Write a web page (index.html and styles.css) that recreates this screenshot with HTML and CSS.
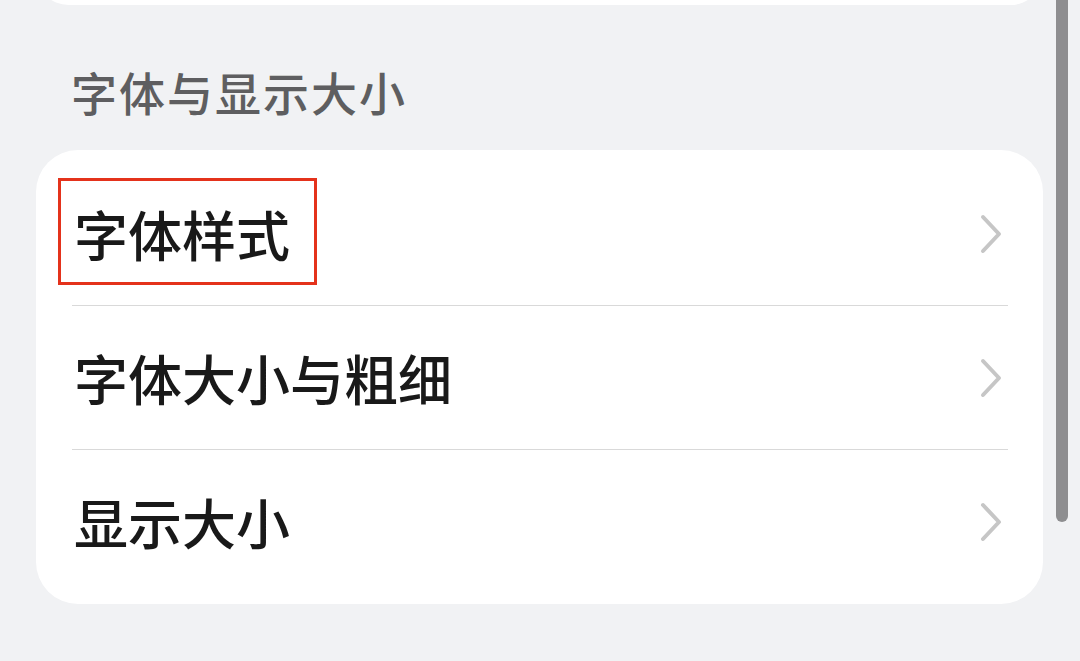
FILE: index.html
```html
<!DOCTYPE html>
<html lang="zh-CN">
<head>
<meta charset="utf-8">
<title>字体与显示大小</title>
<link rel="stylesheet" href="styles.css">
</head>
<body>
<div class="page">
  <div class="card card-top"></div>
  <div class="section-title">字体与显示大小</div>
  <div class="card list">
    <div class="row">
      <span class="label highlighted">字体样式</span>
      <svg class="chevron" viewBox="0 0 24 42" width="24" height="42"><path d="M4 4 L20 21 L4 38" fill="none" stroke="#c6c6c6" stroke-width="4" stroke-linecap="round" stroke-linejoin="round"/></svg>
    </div>
    <div class="divider"></div>
    <div class="row">
      <span class="label">字体大小与粗细</span>
      <svg class="chevron" viewBox="0 0 24 42" width="24" height="42"><path d="M4 4 L20 21 L4 38" fill="none" stroke="#c6c6c6" stroke-width="4" stroke-linecap="round" stroke-linejoin="round"/></svg>
    </div>
    <div class="divider"></div>
    <div class="row">
      <span class="label">显示大小</span>
      <svg class="chevron" viewBox="0 0 24 42" width="24" height="42"><path d="M4 4 L20 21 L4 38" fill="none" stroke="#c6c6c6" stroke-width="4" stroke-linecap="round" stroke-linejoin="round"/></svg>
    </div>
  </div>
</div>
<div class="scrollbar"></div>
</body>
</html>
```
FILE: styles.css
```css
html, body {
  margin: 0;
  padding: 0;
  height: 100%;
  overflow: hidden;
}
body {
  background: #f1f2f4;
  font-family: "Noto Sans CJK SC", "Noto Sans", sans-serif;
  position: relative;
}
.page {
  display: flex;
  flex-direction: column;
  padding: 0 37px 0 36px;
}
.card {
  background: #ffffff;
  border-radius: 42px;
}
.card-top {
  height: 65px;
  margin-top: -60px;
}
.section-title {
  margin-top: 59px;
  margin-bottom: 4px;
  padding-left: 35px;
  font-size: 46px;
  line-height: 55px;
  font-weight: 500;
  color: #5e5e60;
  letter-spacing: 2px;
}
.list {
  margin-top: 27px;
  padding: 13px 0 11px;
  display: flex;
  flex-direction: column;
}
.row {
  height: 142px;
  display: flex;
  align-items: center;
  justify-content: space-between;
  padding: 0 40px 0 38px;
}
.row + .divider + .row {
  height: 143px;
}
.label {
  font-size: 54px;
  line-height: 64px;
  font-weight: 500;
  color: #191919;
  position: relative;
}
.highlighted::after {
  content: "";
  position: absolute;
  left: -16px;
  right: -27px;
  top: -24px;
  bottom: -19px;
  border: 3px solid #e4321b;
}
.chevron {
  display: block;
}
.divider {
  height: 1px;
  background: #d9d9d9;
  margin: 0 35px 0 36px;
}
.scrollbar {
  position: absolute;
  top: -10px;
  left: 1056px;
  width: 12px;
  height: 532px;
  border-radius: 6px;
  background: #8e8e90;
}
```
